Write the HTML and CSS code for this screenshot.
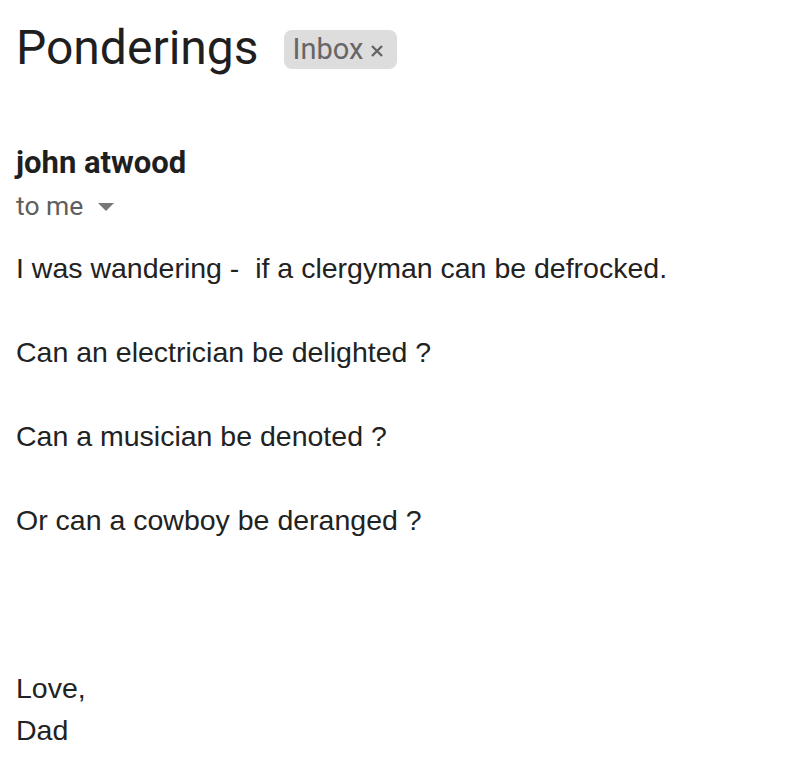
FILE: index.html
```html
<!DOCTYPE html>
<html>
<head>
<meta charset="utf-8">
<link rel="stylesheet" href="styles.css">
</head>
<body>
<div class="mail">
  <div class="subject-row">
    <h1 class="subject">Ponderings</h1>
    <span class="chip">Inbox<svg class="chip-x" viewBox="0 0 14 14" width="14" height="14"><path d="M2 2L12 12M12 2L2 12" stroke="#666" stroke-width="2.4" fill="none"/></svg></span>
  </div>
  <div class="sender">john atwood</div>
  <div class="recipient">to me <span class="caret"></span></div>
  <div class="body">
    <div>I was wandering -&nbsp; if a clergyman can be defrocked.</div>
    <div><br></div>
    <div>Can an electrician be delighted ?</div>
    <div><br></div>
    <div>Can a musician be denoted ?</div>
    <div><br></div>
    <div>Or can a cowboy be deranged ?</div>
    <div><br></div>
    <div><br></div>
    <div><br></div>
    <div>Love,</div>
    <div>Dad</div>
  </div>
</div>
</body>
</html>
```
FILE: styles.css
```css
html, body {
  margin: 0;
  padding: 0;
  background: #fff;
}
.mail {
  padding: 20px 16px 0 16px;
}
.subject-row {
  display: flex;
  align-items: center;
  gap: 25px;
  height: 56px;
}
.subject {
  margin: 0;
  font-family: Roboto, "Noto Sans", sans-serif;
  font-weight: 400;
  font-size: 48px;
  line-height: 56px;
  color: #1f1f1f;
}
.chip {
  display: inline-flex;
  align-items: center;
  gap: 7px;
  height: 39px;
  padding: 0 13px 0 9px;
  box-sizing: border-box;
  background: #dddddd;
  border-radius: 8px;
  font-family: Roboto, "Noto Sans", sans-serif;
  font-size: 29px;
  color: #666;
  margin-top: 2px;
}
.chip-x {
  width: 14px;
  height: 14px;
  margin-top: 3px;
}
.sender {
  margin-top: 69px;
  font-family: Roboto, "Noto Sans", sans-serif;
  font-weight: 700;
  font-size: 31px;
  line-height: 36px;
  color: #1f1f1f;
}
.recipient {
  margin-top: 9px;
  font-family: Roboto, "Noto Sans", sans-serif;
  font-size: 26.5px;
  line-height: 32px;
  color: #5e5e5e;
  display: flex;
  align-items: center;
}
.caret {
  display: inline-block;
  width: 0;
  height: 0;
  border-left: 8px solid transparent;
  border-right: 8px solid transparent;
  border-top: 8px solid #777;
  margin-left: 15px;
  margin-top: 2px;
}
.body {
  margin-top: 25px;
  font-family: "Liberation Sans", Arial, sans-serif;
  font-size: 28.5px;
  line-height: 42px;
  color: #222;
}
```
